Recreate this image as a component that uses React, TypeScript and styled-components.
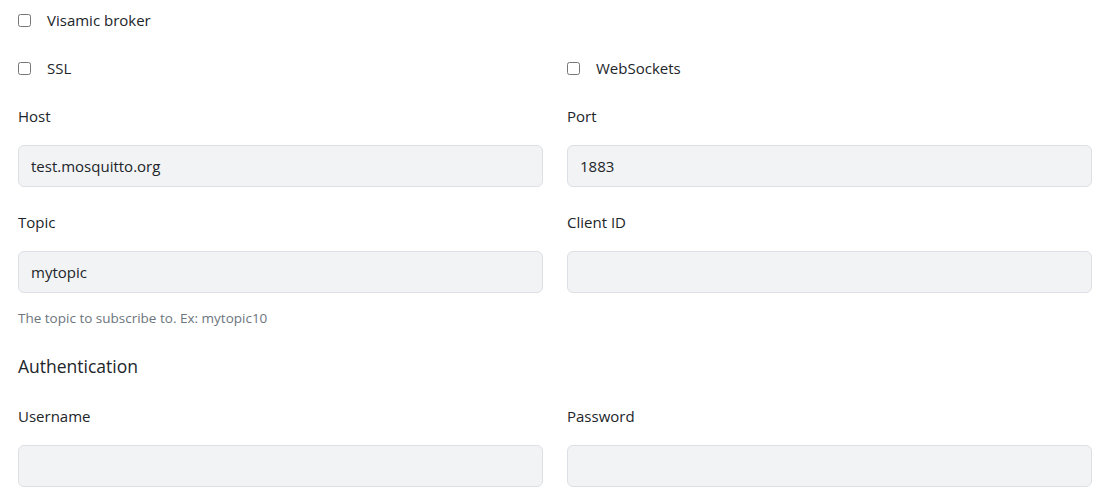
import React from "react";
import styled, { createGlobalStyle } from "styled-components";

const Global = createGlobalStyle`
  html, body { margin: 0; padding: 0; background: #fff; }
  body {
    font-family: "Open Sans", "Noto Sans", sans-serif;
    font-size: 15px;
    color: #212529;
  }
  * { box-sizing: border-box; }
`;

const Page = styled.div`
  padding: 9px 19px 0 18px;
`;

const Grid = styled.div<{ $mb?: number }>`
  display: grid;
  grid-template-columns: 1fr 1fr;
  column-gap: 24px;
  align-items: start;
  margin-bottom: ${(p) => p.$mb ?? 0}px;
`;

const CheckRow = styled.label<{ $mb?: number }>`
  display: flex;
  align-items: center;
  gap: 16px;
  line-height: 22px;
  margin-bottom: ${(p) => p.$mb ?? 0}px;
  cursor: pointer;
`;

const Box = styled.input`
  width: 13px;
  height: 13px;
  margin: 0;
`;

const Group = styled.div`
  display: flex;
  flex-direction: column;
`;

const Label = styled.label`
  line-height: 22px;
  margin-bottom: 18px;
  color: #212529;
`;

const Input = styled.input`
  height: 42px;
  width: 100%;
  padding: 0 12px;
  font: inherit;
  font-size: 15px;
  color: #212529;
  background: #f2f3f5;
  border: 1px solid #dcdfe3;
  border-radius: 6px;
  outline: none;
`;

const Help = styled.div`
  margin-top: 15px;
  font-size: 13.5px;
  line-height: 20px;
  color: #6c757d;
`;

const Heading = styled.h5`
  margin: 0 0 26px;
  font-size: 17.5px;
  font-weight: 400;
  line-height: 26px;
  color: #212529;
`;

const Field = ({ label, value, help }: { label: string; value: string; help?: string }) => (
  <Group>
    <Label>{label}</Label>
    <Input defaultValue={value} />
    {help && <Help>{help}</Help>}
  </Group>
);

export default function App() {
  return (
    <Page>
      <Global />
      <CheckRow $mb={26}>
        <Box type="checkbox" />
        Visamic broker
      </CheckRow>
      <Grid $mb={26}>
        <CheckRow>
          <Box type="checkbox" />
          SSL
        </CheckRow>
        <CheckRow>
          <Box type="checkbox" />
          WebSockets
        </CheckRow>
      </Grid>
      <Grid $mb={24}>
        <Field label="Host" value="test.mosquitto.org" />
        <Field label="Port" value="1883" />
      </Grid>
      <Grid $mb={25}>
        <Field label="Topic" value="mytopic" help="The topic to subscribe to. Ex: mytopic10" />
        <Field label="Client ID" value="" />
      </Grid>
      <Heading>Authentication</Heading>
      <Grid>
        <Field label="Username" value="" />
        <Field label="Password" value="" />
      </Grid>
    </Page>
  );
}
